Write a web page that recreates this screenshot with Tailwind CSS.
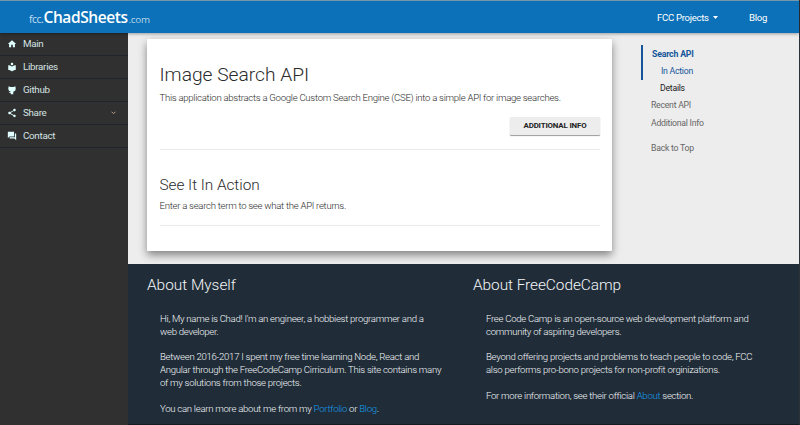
<!DOCTYPE html>
<html lang="en">
<head>
<meta charset="utf-8">
<title>Image Search API</title>
<script src="https://cdn.jsdelivr.net/npm/@tailwindcss/browser@4"></script>
</head>
<body class="w-[800px] h-[425px] overflow-hidden bg-[#ededed] font-[Roboto,sans-serif]">
<div class="flex flex-col w-full h-full border-r border-[#2b3138]">
  <header class="relative z-10 h-[33px] shrink-0 bg-[#0c71b8] border-t border-[#7697aa] shadow-[0_1px_3px_rgba(0,0,0,0.35)] flex items-center text-white whitespace-nowrap">
    <div class="flex items-baseline pl-[29px] pt-[2px] w-[657px] font-['Open_Sans',sans-serif] leading-[30px]">
      <span class="text-[10.5px] w-[14.500px] tracking-[-0.5px] text-[#c5dff0]">fcc.</span>
      <span class="text-[15.5px] w-[85px] font-semibold tracking-[-0.4px]">ChadSheets</span>
      <span class="text-[9.8px] tracking-[-0.2px] text-[#b5d5eb]">.com</span>
    </div>
    <nav class="flex items-center text-[9.6px] tracking-[-0.3px] pt-[2px]">
      <a class="w-[52px]">FCC Projects</a>
      <svg class="w-[5px] h-[3px] ml-[4px] mr-[31px]" viewBox="0 0 5 3" fill="currentColor"><path d="M0 0h5L2.500 3z"/></svg>
      <a>Blog</a>
    </nav>
  </header>
  <div class="flex flex-1 min-h-0">
    <aside class="w-[128px] shrink-0 bg-[#303031] text-[#d5e2e2] text-[9.8px] tracking-[-0.3px]">
      <ul>
        <li class="h-[23px] flex items-center pl-[7px] border-b border-[#20252b]"><svg class="w-[10px] h-[10px] mr-[6px] text-[#e0ffff]" viewBox="0 0 24 24" fill="currentColor"><path d="M10 20v-6h4v6h5v-8h3L12 3 2 12h3v8z"/></svg>Main</li>
        <li class="h-[23px] flex items-center pl-[7px] border-b border-[#20252b]"><svg class="w-[10px] h-[10px] mr-[6px] text-[#e0ffff]" viewBox="0 0 24 24" fill="currentColor"><path d="M12 11.550C9.640 9.350 6.480 8 3 8v11c3.480 0 6.640 1.350 9 3.550 2.360-2.190 5.520-3.550 9-3.550V8c-3.480 0-6.640 1.350-9 3.550zM12 8c1.660 0 3-1.340 3-3s-1.340-3-3-3-3 1.340-3 3 1.340 3 3 3z"/></svg>Libraries</li>
        <li class="h-[23px] flex items-center pl-[7px] border-b border-[#20252b]"><svg class="w-[10px] h-[10px] mr-[6px] text-[#e0ffff]" viewBox="0 0 24 24" fill="currentColor"><path d="M4 3l4 2q4-1 8 0l4-2 1 6q0 6-6 7v6H9v-3q-4 1-5-3 3 2 5 1v-1q-6-1-6-7z"/></svg>Github</li>
        <li class="h-[23px] flex items-center pl-[7px] border-b border-[#20252b]"><svg class="w-[10px] h-[10px] mr-[6px] text-[#e0ffff]" viewBox="0 0 24 24" fill="currentColor"><path d="M18 16.080c-.760 0-1.440.300-1.960.770L8.910 12.700c.050-.230.090-.460.090-.700s-.040-.470-.090-.700l7.050-4.110c.540.500 1.250.810 2.040.810 1.660 0 3-1.340 3-3s-1.340-3-3-3-3 1.340-3 3c0 .240.040.470.090.700L8.040 9.810C7.500 9.310 6.790 9 6 9c-1.660 0-3 1.340-3 3s1.340 3 3 3c.790 0 1.500-.310 2.040-.810l7.120 4.160c-.050.210-.080.430-.080.650 0 1.610 1.310 2.920 2.920 2.920s2.920-1.310 2.920-2.920-1.310-2.920-2.920-2.920z"/></svg>Share<svg class="w-[5px] h-[4px] ml-auto mr-[12px] text-[#b5a486]" viewBox="0 0 5 4" fill="none" stroke="currentColor"><path d="M.500.700l2 2 2-2"/></svg></li>
        <li class="h-[23px] flex items-center pl-[7px] border-b border-[#20252b]"><svg class="w-[10px] h-[10px] mr-[6px] text-[#e0ffff]" viewBox="0 0 24 24" fill="currentColor"><path d="M21 6h-2v9H6v2c0 .550.450 1 1 1h11l4 4V7c0-.550-.450-1-1-1zm-4 6V3c0-.550-.450-1-1-1H3c-.550 0-1 .450-1 1v14l4-4h10c.550 0 1-.450 1-1z"/></svg>Contact</li>
      </ul>
    </aside>
    <div class="flex flex-col flex-1 whitespace-nowrap">
      <div class="h-[231px] shrink-0 flex pt-[6px] pl-[19px]">
        <main class="w-[465px] h-[212px] bg-white rounded-[1px] pl-[12.500px] pr-[12px] shadow-[0_4px_9px_rgba(0,0,0,0.45)] font-light text-[#2b2b2b] flex flex-col">
          <h1 class="text-[19.2px] leading-[24px] mt-[24px]">Image Search API</h1>
          <p class="text-[9.6px] leading-[14px] tracking-[-0.285px] mt-[4px]">This application abstracts a Google Custom Search Engine (CSE) into a simple API for image searches.</p>
          <button class="self-end mt-[12px] w-[90px] h-[18px] rounded-[1px] bg-[#ededed] shadow-[0_1px_1px_rgba(0,0,0,0.4)] text-[7.9px] tracking-[-0.15px] font-bold text-[#222]">ADDITIONAL INFO</button>
          <hr class="border-[#ececec] mt-[14px]">
          <h2 class="text-[15.4px] leading-[20px] tracking-[-0.05px] mt-[25px]">See It In Action</h2>
          <p class="text-[9.6px] leading-[14px] tracking-[-0.285px] mt-[4px]">Enter a search term to see what the API returns.</p>
          <hr class="border-[#ececec] mt-[12px]">
        </main>
        <nav class="ml-[29px] mt-[6px] text-[8.7px] tracking-[-0.25px] leading-[12px] text-[#666]">
          <div class="h-[35px] border-l-2 border-[#15559a] pl-[9px] pt-[3px] text-[#15559a]">
            <a class="block font-bold tracking-[-0.17px]">Search API</a>
            <a class="block pl-[9px] mt-[5px]">In Action</a>
          </div>
          <a class="block pl-[19px] mt-[2px] text-[#222]">Details</a>
          <a class="block pl-[10px] mt-[5px]">Recent API</a>
          <a class="block pl-[10px] mt-[6px]">Additional Info</a>
          <a class="block pl-[10px] mt-[13px]">Back to Top</a>
        </nav>
      </div>
      <footer class="flex-1 bg-[#202d38] border-b border-[#141b22] text-[#f4f6f8] flex font-light pl-[19px] pt-[12px]">
        <section class="w-[326px] shrink-0">
          <h2 class="text-[15.4px] leading-[19px]">About Myself</h2>
          <div class="pl-[13px] pt-[18px] text-[9.6px] tracking-[-0.285px] leading-[12.800px] flex flex-col gap-[12.800px]">
            <p>Hi, My name is Chad! I'm an engineer, a hobbiest programmer and a<br>web developer.</p>
            <p>Between 2016-2017 I spent my free time learning Node, React and<br>Angular through the FreeCodeCamp Cirriculum. This site contains many<br>of my solutions from those projects.</p>
            <p>You can learn more about me from my <a class="text-[#189be8]">Portfolio</a> or <a class="text-[#189be8]">Blog</a>.</p>
          </div>
        </section>
        <section>
          <h2 class="text-[15.4px] leading-[19px] tracking-[-0.05px]">About FreeCodeCamp</h2>
          <div class="pl-[13px] pt-[18px] text-[9.6px] tracking-[-0.285px] leading-[12.800px] flex flex-col gap-[12.800px]">
            <p>Free Code Camp is an open-source web development platform and<br>community of aspiring developers.</p>
            <p>Beyond offering projects and problems to teach people to code, FCC<br>also performs pro-bono projects for non-profit orginizations.</p>
            <p>For more information, see their official <a class="text-[#189be8]">About</a> section.</p>
          </div>
        </section>
      </footer>
    </div>
  </div>
</div>
</body>
</html>
